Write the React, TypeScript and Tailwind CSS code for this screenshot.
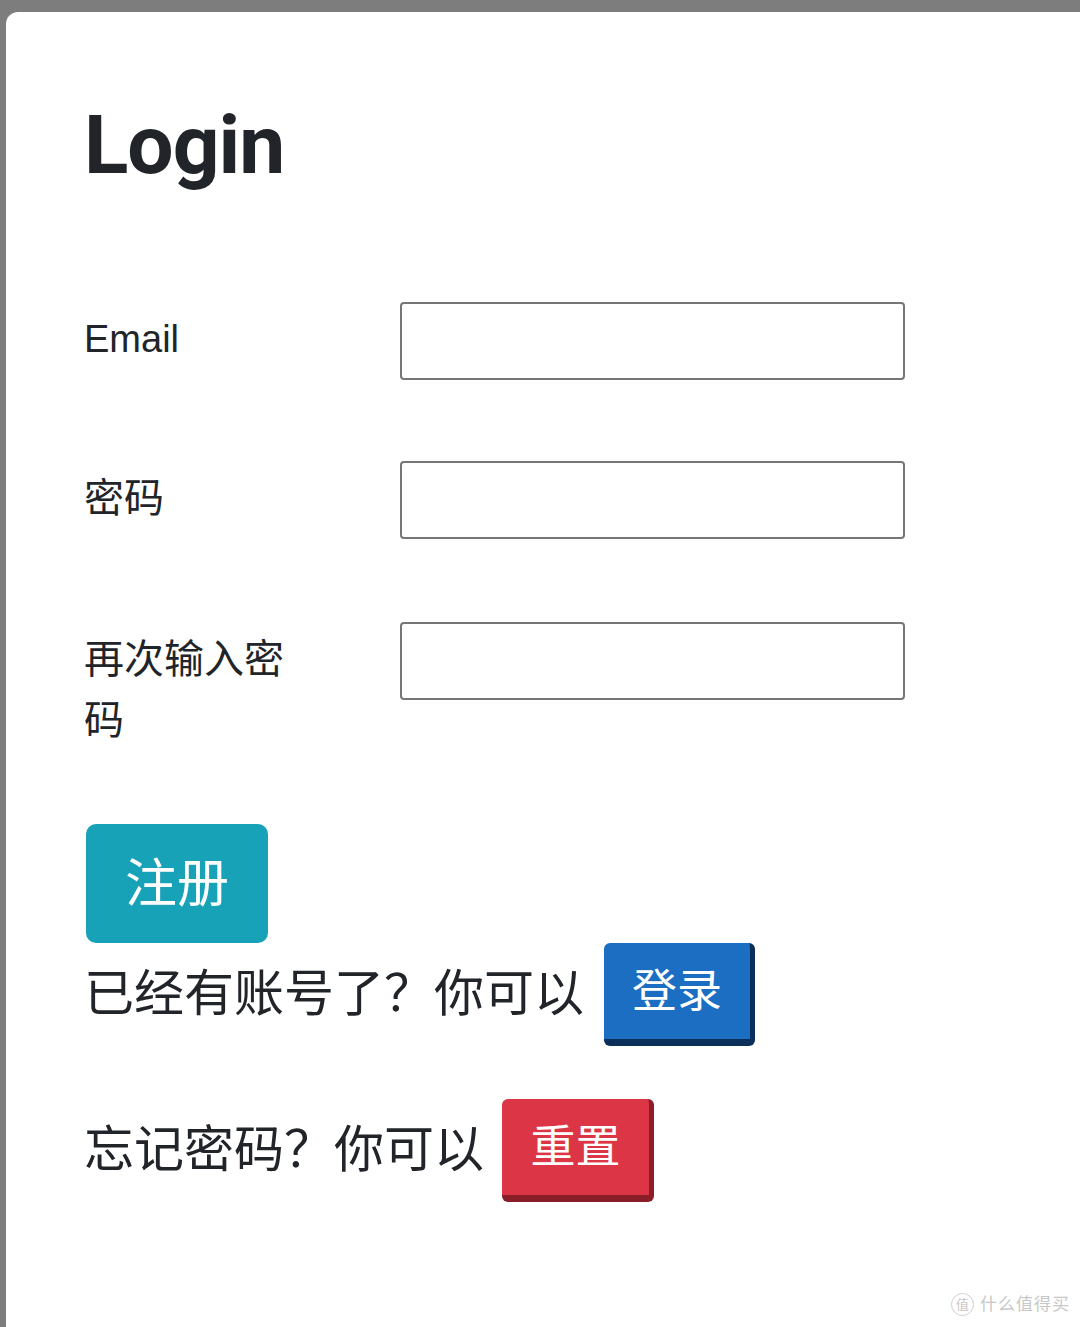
import React from 'react';

const cjk = '"Liberation Sans", "Noto Sans CJK SC", sans-serif';

const Campo: React.FC<{ label: string; tipo?: string; className?: string; labelClass?: string }> = ({
  label,
  tipo = 'text',
  className = '',
  labelClass = 'text-[38px]',
}) => (
  <div className={`flex items-start ${className}`}>
    <label className={`w-[316px] pt-[7px] pr-[100px] leading-[61px] text-[#212529] ${labelClass}`}>
      {label}
    </label>
    <input
      type={tipo}
      className="w-[505px] h-[78px] border-2 border-[#767676] rounded-[4px] bg-white outline-none"
    />
  </div>
);

export default function App() {
  return (
    <div className="min-h-[1327px] bg-[#7d7d7d] pt-[12px] pl-[6px]" style={{ fontFamily: cjk }}>
      <div className="min-h-[1315px] bg-white rounded-tl-[12px] pl-[78px] pt-[85px] relative">
        <h1
          className="text-[82px] leading-[96px] font-bold tracking-[-1px] text-[#212529]"
          style={{ fontFamily: 'Roboto, "Liberation Sans", sans-serif' }}
        >
          Login
        </h1>

        <form className="mt-[109px]" onSubmit={e => e.preventDefault()}>
          <Campo label="Email" tipo="email" className="mb-[81px]" />
          <Campo label="密码" tipo="password" className="mb-[83px]" labelClass="text-[40px]" />
          <Campo label="再次输入密码" tipo="password" labelClass="text-[40px]" />

          <button
            type="submit"
            className="mt-[73px] ml-[2px] w-[182px] h-[119px] rounded-[10px] bg-[#17a2b8] text-white text-[52px] leading-none"
          >
            注册
          </button>
        </form>

        <div className="flex items-center text-[50px] text-[#212529]">
          <span>已经有账号了？你可以</span>
          <button className="ml-[20px] w-[151px] h-[103px] rounded-[6px] bg-[#1b6ec2] border-r-[5px] border-b-[7px] border-[#0c2f5a] text-white text-[45px] leading-none">
            登录
          </button>
        </div>

        <div className="flex items-center mt-[53px] text-[50px] text-[#212529]">
          <span>忘记密码？你可以</span>
          <button className="ml-[18px] w-[152px] h-[103px] rounded-[6px] bg-[#dc3545] border-r-[5px] border-b-[7px] border-[#8a1f2a] text-white text-[45px] leading-none">
            重置
          </button>
        </div>

        <div className="absolute right-[10px] bottom-[10px] flex items-center gap-[6px] text-[#c8c8c8]">
          <span className="w-[23px] h-[23px] rounded-full border border-[#d0d0d0] flex items-center justify-center text-[13px]">
            值
          </span>
          <span className="text-[17px] tracking-[1px]">什么值得买</span>
        </div>
      </div>
    </div>
  );
}
